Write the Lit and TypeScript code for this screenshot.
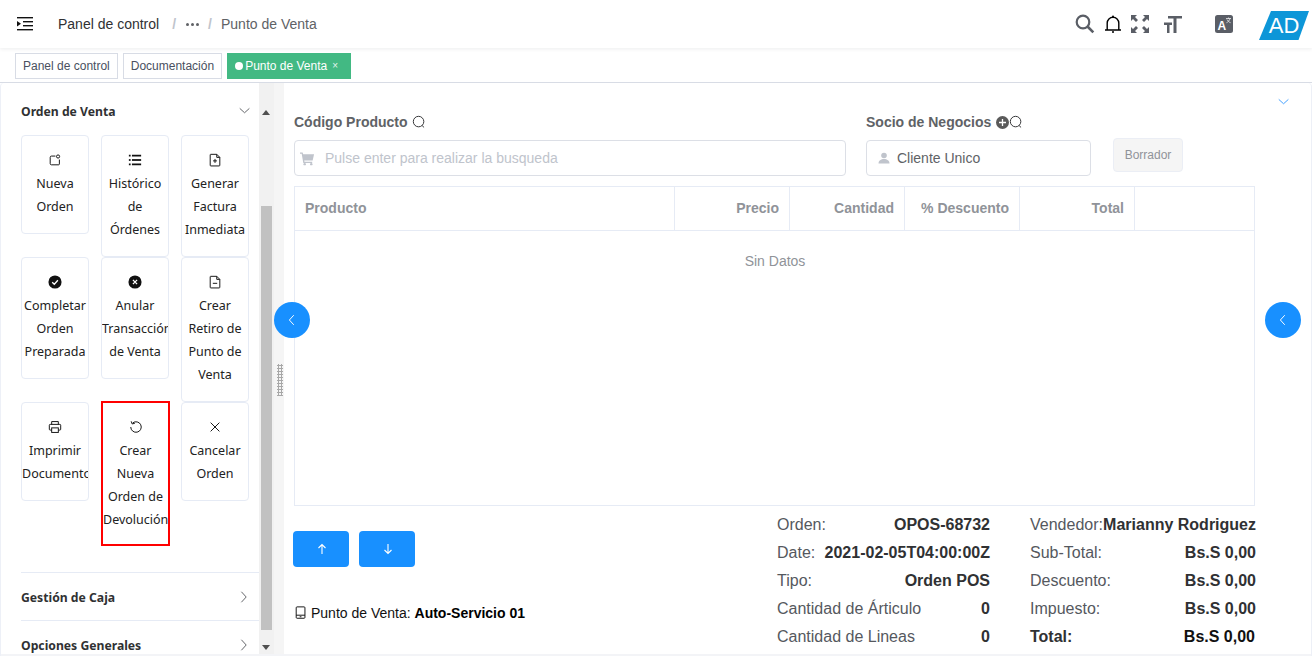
import { LitElement, html, css, svg } from "lit";
import { customElement } from "lit/decorators.js";

const sv = (w: number, body: unknown, vb = "0 0 16 16", cls = "") =>
  html`<svg class=${cls} width=${w} height=${w} viewBox=${vb} fill="none" stroke="currentColor" stroke-width="1.1">${body}</svg>`;

const I = {
  newOrder: svg`<path d="M8.5 3.5H4a1.5 1.5 0 0 0-1.5 1.5v7A1.5 1.5 0 0 0 4 13.500h8a1 1 0 0 0 1-1V7.500"/><circle cx="11.500" cy="4" r="1.800"/>`,
  list: svg`<g fill="currentColor" stroke="none"><rect x="1" y="2" width="2" height="2"/><rect x="4.500" y="2" width="10.500" height="2"/><rect x="1" y="7" width="2" height="2"/><rect x="4.500" y="7" width="10.500" height="2"/><rect x="1" y="12" width="2" height="2"/><rect x="4.500" y="12" width="10.500" height="2"/></g>`,
  docPlus: svg`<path d="M3 1.500h7l3.500 3.500v9a.8.8 0 0 1-.8.8H3.300a.8.8 0 0 1-.8-.8V2a.8.8 0 0 1 .5-.5z"/><path d="M10 1.500V5h3.500M8 6.800v4.500M5.800 9h4.400"/>`,
  check: svg`<circle cx="8" cy="8" r="7.500" fill="currentColor" stroke="none"/><path d="M4.800 8.200 7.200 10.500 11.300 6" stroke="#fff" stroke-width="1.500"/>`,
  cross: svg`<circle cx="8" cy="8" r="7.500" fill="currentColor" stroke="none"/><path d="M5.600 5.600l4.800 4.800M10.400 5.600l-4.800 4.800" stroke="#fff" stroke-width="1.500"/>`,
  docMinus: svg`<path d="M3 1.500h7l3.500 3.500v9a.8.8 0 0 1-.8.8H3.300a.8.8 0 0 1-.8-.8V2a.8.8 0 0 1 .5-.5z"/><path d="M10 1.500V5h3.500M5.500 9.500h5"/>`,
  printer: svg`<path d="M4.200 5V1.800h7.600V5M4.200 11.500H2.500a1 1 0 0 1-1-1V6a1 1 0 0 1 1-1h11a1 1 0 0 1 1 1v4.500a1 1 0 0 1-1 1h-1.700"/><rect x="4.200" y="9" width="7.600" height="5.200"/>`,
  undo: svg`<path d="M4.300 3.300A6 6 0 1 1 2 8"/><path d="M2.500 1.500 3.600 4.500 6.700 3.700" />`,
  close: svg`<path d="M3 3l10 10M13 3 3 13"/>`,
};

const actions: { icon: unknown; lines: string; red?: boolean }[] = [
  { icon: I.newOrder, lines: "Nueva Orden" },
  { icon: I.list, lines: "Histórico de Órdenes" },
  { icon: I.docPlus, lines: "Generar Factura Inmediata" },
  { icon: I.check, lines: "Completar Orden Preparada" },
  { icon: I.cross, lines: "Anular Transacción de Venta" },
  { icon: I.docMinus, lines: "Crear Retiro de Punto de Venta" },
  { icon: I.printer, lines: "Imprimir Documento" },
  { icon: I.undo, lines: "Crear Nueva Orden de Devolución", red: true },
  { icon: I.close, lines: "Cancelar Orden" },
];

const search = sv(14, svg`<circle cx="7.500" cy="7.500" r="6"/><path d="M11.500 12 13.800 14.200"/>`);

const chevDown = sv(14, svg`<path d="M2 5l5.500 5L13 5"/>`);
const chevRight = sv(14, svg`<path d="M5 2l5.500 6L5 14"/>`);
const chevLeft = sv(14, svg`<path d="M10 2.500 5 8l5 5.500"/>`);

const summaryA = [
  ["Orden:", "OPOS-68732"],
  ["Date:", "2021-02-05T04:00:00Z"],
  ["Tipo:", "Orden POS"],
  ["Cantidad de Árticulo", "0"],
  ["Cantidad de Lineas", "0"],
];
const summaryB = [
  ["Vendedor:", "Marianny Rodriguez"],
  ["Sub-Total:", "Bs.S 0,00"],
  ["Descuento:", "Bs.S 0,00"],
  ["Impuesto:", "Bs.S 0,00"],
];

@customElement("app-root")
export class AppRoot extends LitElement {
  static styles = css`
    :host { display: flex; flex-direction: column; width: 1312px; height: 656px; overflow: hidden; background: #fff;
      font-family: "Liberation Sans", Arial, sans-serif; color: #606266; font-size: 14px; position: relative; }
    svg { display: block; flex: none; }
    .header { height: 48px; flex: none; display: flex; align-items: center; box-shadow: 0 1px 4px rgba(0,21,41,.08); position: relative; z-index: 2; }
    .burger { margin-left: 17px; color: #111; }
    .crumbs { display: flex; align-items: center; margin-left: 25px; color: #97a8be; }
    .crumbs .first { color: #303133; }
    .crumbs .sep { margin: 0 9px 0 13px; color: #c0c4cc; font-weight: 700; }
    .crumbs .sep2 { margin: 0 9px 0 9px; }
    .crumbs .dots { color: #606266; display: flex; gap: 2px; margin-left: 1px; }
    .crumbs .dots i { width: 3px; height: 3px; background: #606266; border-radius: 50%; display: block; }
    .crumbs .cur { color: #606266; }
    .tools { margin-left: auto; display: flex; align-items: center; color: #5a5e66; }
    .t-search { margin-right: 9px; }
    .t-bell { margin-right: 9px; color: #000; }
    .t-full { margin-right: 15px; }
    .t-font { margin-right: 33px; }
    .t-lang { margin-right: 26px; }
    .logo { width: 50px; height: 29px; margin: 3px 3px 0 0; background: #0d96d8; clip-path: polygon(24% 0, 100% 0, 79% 100%, 0 100%); color: #fff; font-size: 22px; display: flex; align-items: center; justify-content: center; box-sizing: border-box; }
    .tags { height: 35px; flex: none; display: flex; align-items: center; gap: 5px; padding: 2px 0 0 15px; box-sizing: border-box; border-bottom: 1px solid #d8dce5; background: #fff; }
    .tag { height: 26px; box-sizing: border-box; border: 1px solid #d8dce5; padding: 0 7px; font-size: 12px; line-height: 24px; color: #495060; background: #fff; }
    .tag.on { background: #42b983; border-color: #42b983; color: #fff; display: flex; align-items: center; padding-right: 12px; }
    .tag.on .dot { width: 8px; height: 8px; background: #fff; border-radius: 50%; margin-right: 2px; }
    .tag.on .x { font-size: 10px; margin-left: 5px; opacity: .85; }
    .main { flex: 1; display: flex; min-height: 0; position: relative; border-radius: 4px 4px 0 0; border-left: 1px solid #edf0f7; border-right: 1px solid #edf0f7; }
    .side { width: 258px; flex: none; overflow: hidden; font-family: "Noto Sans", sans-serif; padding-left: 20px; box-sizing: border-box; color: #303133; }
    .acc { height: 48px; display: flex; align-items: center; justify-content: space-between; padding-right: 7px; font-size: 12.200px; font-weight: 700; color: #303133; box-sizing: border-box; flex: none; }
    .acc svg { color: #606266; }
    .acc.line { border-top: 1px solid #e6ebf5; padding: 2px 8px 0 0; }
    .acc.line svg { margin-top: -2px; }
    .grid { display: grid; grid-template-columns: repeat(3, 68px); column-gap: 12px; align-items: start; margin-bottom: 26px; }
    .card { box-sizing: border-box; border: 1px solid #e6ebf5; border-radius: 4px; padding: 17px 0 15px; text-align: center; font-size: 12.500px; line-height: 23px; color: #222; overflow: hidden; background: #fff; }
    .card svg { margin: 0 auto 5px; width: 14px; height: 14px; color: #111; }
    .card.red { border: 2px solid #f00; border-radius: 0; padding: 17px 0 13px; width: 69px; margin-top: -1px; }
    .bar { width: 25px; flex: none; background: linear-gradient(90deg, #f1f1f1 15px, #f5f5f5 15px); position: relative; }
    .thumb { position: absolute; left: 2px; width: 11px; top: 123px; height: 424px; background: #c1c1c1; }
    .arrow { position: absolute; left: 3px; width: 0; height: 0; border-left: 4.500px solid transparent; border-right: 4.500px solid transparent; }
    .arrow.up { top: 27px; border-bottom: 5px solid #505050; }
    .arrow.down { bottom: 6px; border-top: 5px solid #505050; }
    .grip { position: absolute; left: 18px; top: 281px; width: 6px; height: 32px; background-image: radial-gradient(#a8a8a8 1.100px, transparent 1.100px); background-size: 3px 3px; }
    .right { flex: 1; min-width: 0; padding: 0 0 0 10px; position: relative; }
    .fields { height: 103px; display: flex; box-sizing: border-box; padding-top: 30px; }
    .f1 { width: 552px; margin-right: 20px; }
    .f2 { width: 225px; margin-right: 22px; }
    .label { display: flex; align-items: center; height: 18px; font-weight: 700; color: #606266; margin-bottom: 9px; line-height: 18px; }
    .label svg { color: #303133; margin-left: 4px; }
    .label .pl { margin-left: 5px; width: 13px; height: 13px; border-radius: 50%; background: #5a5a5a; color: #fff; flex: none; display: flex; align-items: center; justify-content: center; }
    .label .pl svg { margin: 0; color: #fff; }
    .label .pl + svg { margin-left: 0; }
    .input { height: 36px; box-sizing: border-box; border: 1px solid #dcdfe6; border-radius: 4px; display: flex; align-items: center; color: #606266; }
    .input .ph { color: #c0c4cc; margin-left: 10px; }
    .input svg { color: #c0c4cc; }
    .ci { margin: 0 7px 0 11px; }
    .cart { margin-left: 5px; }
    .borrar { width: 70px; height: 34px; box-sizing: border-box; margin-top: 25px; background: #f5f5f5; border: 1px solid #ebeef5; border-radius: 4px; color: #909399; font-size: 12px; display: flex; align-items: center; justify-content: center; }
    .table { width: 961px; height: 320px; box-sizing: border-box; border: 1px solid #e6ebf5; }
    .thead { display: grid; grid-template-columns: 380px 115px 115px 115px 115px 1fr; height: 44px; border-bottom: 1px solid #e6ebf5; box-sizing: border-box; color: #909399; font-weight: 700; }
    .thead div { padding: 0 10px; line-height: 43px; text-align: right; border-right: 1px solid #e6ebf5; }
    .thead div:first-child { text-align: left; }
    .thead div:last-child { border-right: 0; }
    .empty { text-align: center; color: #909399; padding: 21px 0 0 1px; line-height: 18px; }
    .bottom { display: flex; }
    .bleft { width: 483px; }
    .btns { display: flex; gap: 10px; margin: 25px 0 0 -1px; }
    .btn { width: 56px; height: 36px; border-radius: 4px; background: #1890ff; color: #fff; display: flex; align-items: center; justify-content: center; padding-left: 1px; box-sizing: border-box; }
    .pos { display: flex; align-items: center; gap: 3px; margin-top: 37px; color: #111; line-height: 18px; }
    .pos b { color: #000; }
    .sum { width: 213px; margin-top: 5px; font-size: 16px; color: #55585e; }
    .sum.b { width: 226px; margin-left: 40px; }
    .row { height: 28px; display: flex; justify-content: space-between; align-items: center; white-space: nowrap; }
    .row b { color: #303133; }
    .row.tot { color: #303133; font-weight: 700; padding-right: 1px; }
    .row.tot b { color: #111; }
    .circle { position: absolute; top: 219px; width: 36px; height: 36px; border-radius: 50%; background: #1890ff; color: #fff; display: flex; align-items: center; justify-content: center; z-index: 3; }
    .c1 { left: 273px; }
    .c2 { left: 1264px; }
    .collapse { position: absolute; top: 12px; left: 1276px; color: #409eff; z-index: 1; }
    .foot { position: absolute; left: 0; right: 0; bottom: 0; height: 2px; background: #f3f4f7; z-index: 1; }
  `;

  render() {
    return html`
      <div class="header">
        ${sv(16, svg`<g fill="currentColor" stroke="none"><rect x="0" y="1" width="16" height="1.400"/><rect x="6" y="5" width="10" height="1.400"/><rect x="6" y="9" width="10" height="1.400"/><rect x="0" y="13" width="16" height="1.400"/><path d="M0 5l4 2.700L0 10.500z"/></g>`, "0 0 16 16", "burger")}
        <div class="crumbs">
          <span class="first">Panel de control</span><span class="sep">/</span>
          <span class="dots"><i></i><i></i><i></i></span><span class="sep sep2">/</span>
          <span class="cur">Punto de Venta</span>
        </div>
        <div class="tools">
          ${sv(20, svg`<circle cx="8" cy="8" r="6.300" stroke-width="2.200"/><path d="M12.500 12.500 18.300 18.300" stroke-width="2.600"/>`, "0 0 20 20", "t-search")}
          ${sv(18, svg`<path d="M1 15h16M3.200 15V8a5.800 5.800 0 0 1 11.600 0v7" stroke-width="1.400"/><circle cx="9" cy="1.500" r="1" fill="currentColor" stroke="none"/><circle cx="9" cy="17" r="1" fill="currentColor" stroke="none"/>`, "0 0 18 18", "t-bell")}
          ${sv(18, svg`<g fill="currentColor" stroke="none"><path d="M0 0h6L4 2l3 3-2 2-3-3-2 2zM18 0v6l-2-2-3 3-2-2 3-3-2-2zM0 18v-6l2 2 3-3 2 2-3 3 2 2zM18 18h-6l2-2-3-3 2-2 3 3 2-2z"/></g>`, "0 0 18 18", "t-full")}
          ${sv(18, svg`<g fill="currentColor" stroke="none"><path d="M4 1h14v2.500h-5.500V18h-3V3.500H4zM0 7.500h8V10H5.500v8H3v-8H0z"/></g>`, "0 0 18 18", "t-font")}
          <svg class="t-lang" width="18" height="18" viewBox="0 0 18 18"><rect width="18" height="18" rx="2.500" fill="#5a5e66"/><text x="2.500" y="15" font-size="12" font-weight="700" fill="#fff" font-family="Liberation Sans">A</text><path d="M11 3.500h5M13.500 2.500v1M15 3.500c-.5 2-2 3.500-3.500 4.200M12 4.500c.6 1.300 2 2.700 3.600 3.200" stroke="#fff" stroke-width=".7" fill="none"/></svg>
          <div class="logo">AD</div>
        </div>
      </div>
      <div class="tags">
        <div class="tag">Panel de control</div>
        <div class="tag">Documentación</div>
        <div class="tag on"><span class="dot"></span>Punto de Venta<span class="x">×</span></div>
      </div>
      <div class="main">
        <div class="side">
          <div class="acc" style="margin-top:4px">Orden de Venta ${chevDown}</div>
          <div class="grid">
            ${actions.map(
              (a) => html`<div class="card ${a.red ? "red" : ""}">${sv(14, a.icon)}${a.lines}</div>`
            )}
          </div>
          <div class="acc line">Gestión de Caja ${chevRight}</div>
          <div class="acc line">Opciones Generales ${chevRight}</div>
        </div>
        <div class="bar">
          <div class="arrow up"></div><div class="thumb"></div><div class="arrow down"></div><div class="grip"></div>
        </div>
        <div class="right">
          <div class="fields">
            <div class="f1">
              <div class="label">Código Producto ${search}</div>
              <div class="input">
                ${sv(15, svg`<g fill="currentColor" stroke="none"><path d="M0 1.500h2.800l.6 2H15l-1.500 6.500H4.500l.3 1.500H13v1.300H3.500L1.800 2.800H0z"/><circle cx="5" cy="14" r="1.300"/><circle cx="12" cy="14" r="1.300"/></g>`, "0 0 16 16", "cart")}
                <span class="ph">Pulse enter para realizar la busqueda</span>
              </div>
            </div>
            <div class="f2">
              <div class="label">Socio de Negocios <span class="pl">${sv(9, svg`<path d="M4.500 1v7M1 4.500h7" stroke-width="1.300"/>`, "0 0 9 9")}</span>${search}</div>
              <div class="input">
                ${sv(12, svg`<g fill="currentColor" stroke="none"><circle cx="6" cy="3.500" r="2.800"/><path d="M.5 11.500c0-3 2.500-4.500 5.500-4.500s5.500 1.500 5.500 4.500z"/></g>`, "0 0 12 12", "ci")}
                Cliente Unico
              </div>
            </div>
            <div class="borrar">Borrador</div>
          </div>
          <div class="table">
            <div class="thead">
              <div>Producto</div><div>Precio</div><div>Cantidad</div><div>% Descuento</div><div>Total</div><div></div>
            </div>
            <div class="empty">Sin Datos</div>
          </div>
          <div class="bottom">
            <div class="bleft">
              <div class="btns">
                <div class="btn">${sv(12, svg`<path d="M6 11V1.500M2.500 5 6 1.500 9.500 5"/>`, "0 0 12 12")}</div>
                <div class="btn">${sv(12, svg`<path d="M6 1v9.500M2.500 7 6 10.500 9.500 7"/>`, "0 0 12 12")}</div>
              </div>
              <div class="pos">
                ${sv(14, svg`<rect x="2.500" y="1" width="10" height="13" rx="1"/><path d="M2.500 10.500h10M6.500 12.300h2"/>`)}
                <span>Punto de Venta: <b>Auto-Servicio 01</b></span>
              </div>
            </div>
            <div class="sum">
              ${summaryA.map((r) => html`<div class="row"><span>${r[0]}</span><b>${r[1]}</b></div>`)}
            </div>
            <div class="sum b">
              ${summaryB.map((r) => html`<div class="row"><span>${r[0]}</span><b>${r[1]}</b></div>`)}
              <div class="row tot"><span>Total:</span><b>Bs.S 0,00</b></div>
            </div>
          </div>
        </div>
        <div class="circle c1">${chevLeft}</div>
        <div class="circle c2">${chevLeft}</div>
        <div class="collapse">${chevDown}</div>
        <div class="foot"></div>
      </div>
    `;
  }
}
